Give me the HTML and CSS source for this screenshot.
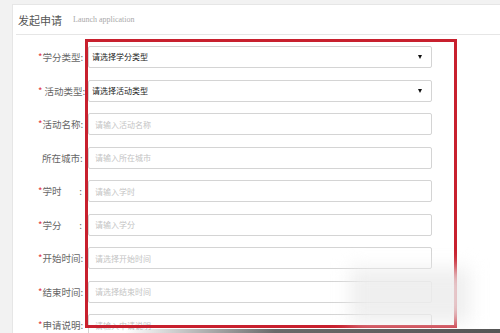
FILE: index.html
```html
<!DOCTYPE html>
<html lang="zh-CN">
<head>
  <meta charset="UTF-8" />
  <meta name="viewport" content="width=device-width, initial-scale=1.0" />
  <title>发起申请</title>
  <link rel="stylesheet" href="styles.css">
</head>
<body>
  <div class="panel">
    <div class="panel-head">
      <h2>发起申请</h2>
      <span class="sub">Launch application</span>
    </div>
    <form class="apply-form">
      <div class="row">
        <label class="lbl"><span><i>*</i>学分类型</span><span>:</span></label>
        <div class="select-box">
          <select>
            <option>请选择学分类型</option>
          </select>
        </div>
      </div>
      <div class="row">
        <label class="lbl"><span><i>*</i> 活动类型</span><span>:</span></label>
        <div class="select-box">
          <select>
            <option>请选择活动类型</option>
          </select>
        </div>
      </div>
      <div class="row">
        <label class="lbl"><span><i>*</i>活动名称</span><span>:</span></label>
        <input type="text" placeholder="请输入活动名称">
      </div>
      <div class="row">
        <label class="lbl lbl-plain"><span>所在城市</span><span>:</span></label>
        <input type="text" placeholder="请输入所在城市">
      </div>
      <div class="row">
        <label class="lbl"><span><i>*</i>学时</span><span>:</span></label>
        <input type="text" placeholder="请输入学时">
      </div>
      <div class="row">
        <label class="lbl"><span><i>*</i>学分</span><span>:</span></label>
        <input type="text" placeholder="请输入学分">
      </div>
      <div class="row">
        <label class="lbl"><span><i>*</i>开始时间</span><span>:</span></label>
        <input type="text" placeholder="请选择开始时间">
      </div>
      <div class="row">
        <label class="lbl"><span><i>*</i>结束时间</span><span>:</span></label>
        <input type="text" placeholder="请选择结束时间">
      </div>
      <div class="row">
        <label class="lbl"><span><i>*</i>申请说明</span><span>:</span></label>
        <input type="text" placeholder="请输入申请说明">
      </div>
    </form>
  </div>

  <!-- annotation drawn over the screenshot -->
  <div class="mark"></div>
  <div class="smudge"></div>
  <div class="bottom-bar"></div>
</body>
</html>
```

FILE: styles.css
```css
body {
  margin: 0;
  background: #f2f2f2;
  font-family: "Noto Sans CJK SC", "Noto Sans", sans-serif;
  height: 333px;
  overflow: hidden;
}
.panel {
  margin: 4px 0 0 12px;
  background: white;
  border: 1px solid #e6e6e6;
  border-right: none;
  height: 340px;
}
.panel-head {
  display: flex;
  align-items: center;
  gap: 11px;
  height: 29px;
  margin: 0 0 0 3px;
  padding-left: 2px;
  border-bottom: 1px solid #e6e6e6;
}
.panel-head h2 {
  margin: 0;
  font-size: 11px;
  font-weight: normal;
  color: #555;
}
.panel-head .sub {
  font-family: "Liberation Serif", serif;
  font-size: 8px;
  color: #aaa;
}
.apply-form {
  padding-top: 11px;
}
.row {
  display: flex;
  align-items: center;
  height: 22px;
  margin-bottom: 11.5px;
}
.lbl {
  display: flex;
  justify-content: space-between;
  width: 44px;
  margin-left: 25px;
  margin-right: 6px;
  font-size: 9.5px;
  color: #666;
  white-space: pre;
}
.lbl i {
  font-style: normal;
  color: #e0353b;
}
.lbl-plain {
  padding-left: 4px;
  width: 40px;
}
input[type="text"],
.select-box {
  box-sizing: border-box;
  width: 344px;
  height: 22px;
  border: 1px solid #d4d4d4;
  border-radius: 2px;
  background: white;
}
input[type="text"] {
  padding: 0 6px;
  font-family: inherit;
  font-size: 8px;
  color: #333;
}
input::placeholder {
  color: #c4c4c4;
}
.select-box {
  position: relative;
}
.select-box select {
  appearance: none;
  display: block;
  box-sizing: border-box;
  margin: 0;
  border: none;
  background: transparent;
  width: 100%;
  height: 20px;
  line-height: 20px;
  padding: 0 3px;
  font-family: inherit;
  font-size: 8px;
  color: #222;
}
.select-box::after {
  content: "";
  position: absolute;
  right: 9px;
  top: 8px;
  border-left: 2.5px solid transparent;
  border-right: 2.5px solid transparent;
  border-top: 4px solid #111;
}
.mark {
  position: absolute;
  left: 85px;
  top: 39px;
  width: 366px;
  height: 283px;
  border: 3px solid #c8202e;
}
.smudge {
  position: absolute;
  left: 350px;
  top: 268px;
  width: 120px;
  height: 55px;
  background: rgba(236, 236, 236, 0.85);
  filter: blur(9px);
}
.bottom-bar {
  position: absolute;
  left: 0;
  top: 329px;
  width: 500px;
  height: 4px;
  background: linear-gradient(to right, rgba(80,80,80,0) 25%, #6a6a6a 55%, #555 100%);
}
```
